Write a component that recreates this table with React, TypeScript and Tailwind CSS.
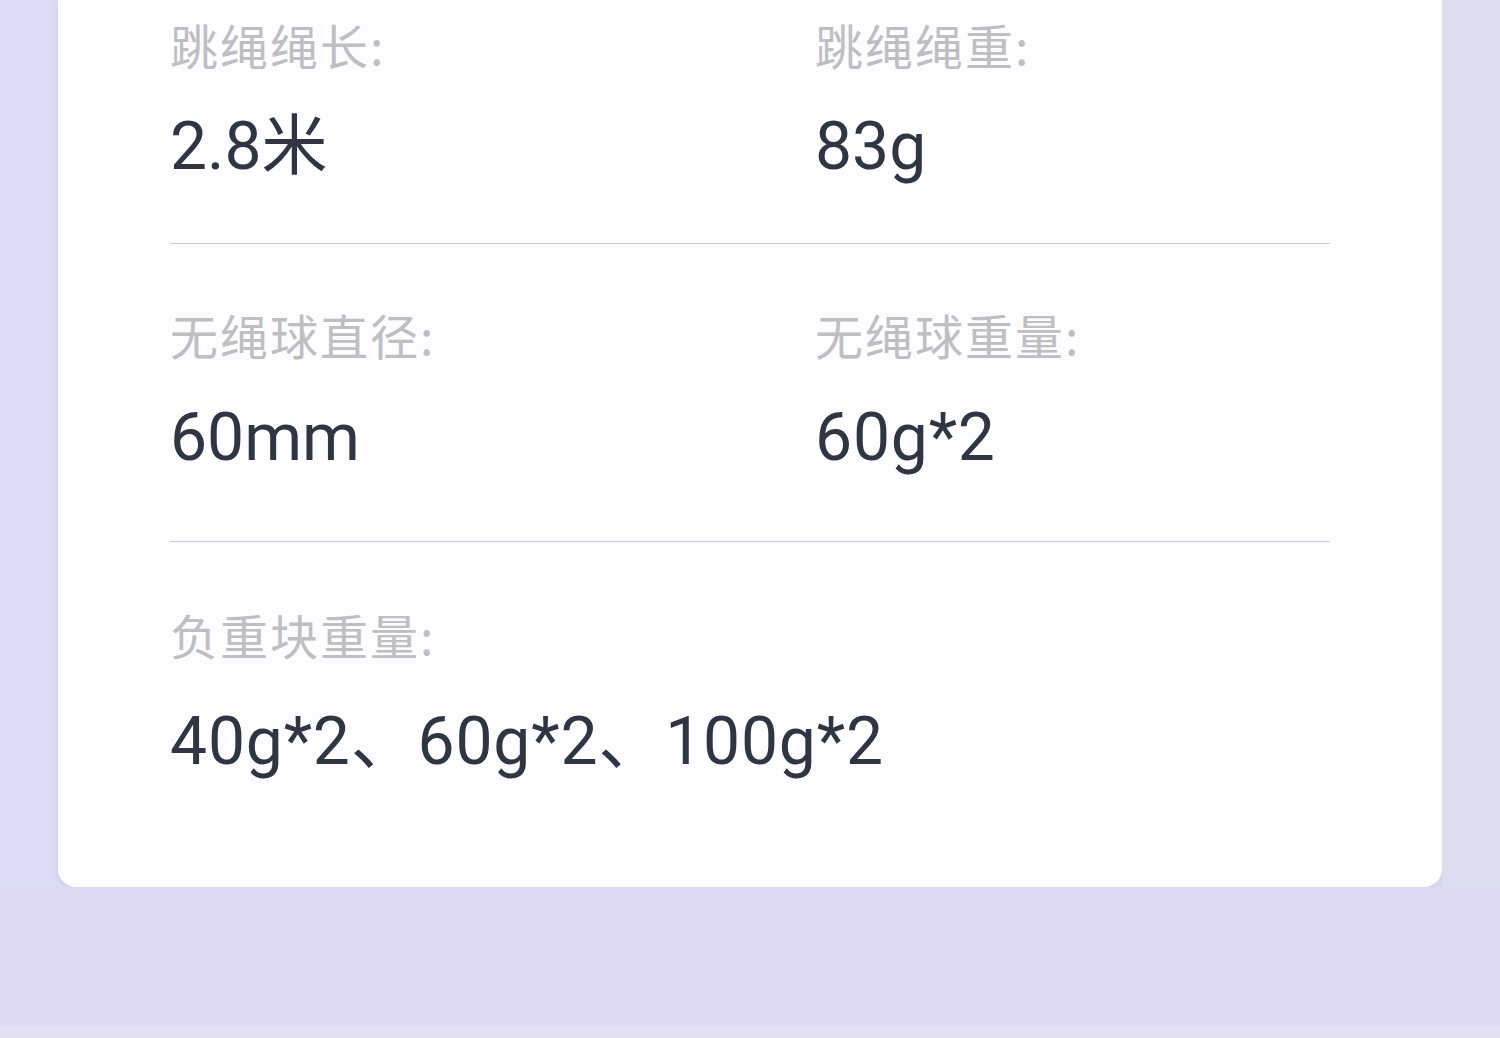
import React from "react";

const labelCls =
  "h-[60px] leading-[60px] text-[48px] text-[#bebec3] tracking-[2px] [font-family:'Noto_Sans_CJK_SC',sans-serif]";
const valueCls =
  "h-[80px] leading-[80px] text-[66px] text-[#2f3542] [font-family:Roboto,'Noto_Sans_CJK_SC',sans-serif]";

function Item({ label, value, gap, wide }: { label: string; value: string; gap: string; wide?: boolean }) {
  return (
    <div className="flex flex-col">
      <div className={labelCls}>{label}</div>
      <div className={gap + " " + valueCls + (wide ? " tracking-[0.8px]" : "")}>{value}</div>
    </div>
  );
}

export default function App() {
  return (
    <div className="w-[1500px] h-[1038px] bg-[#dddaf3] overflow-hidden flex flex-col">
      <div className="flex h-[887px] bg-[#dcdcf6]">
        <div className="w-[58px] bg-[#dcdcf6]" />
        <div className="w-[1384px] h-[887px] bg-[#fdfdff] rounded-b-[18px] px-[112px] pt-[14px] flex flex-col shadow-[0_2px_6px_rgba(160,150,200,0.25)]">
          <div className="grid grid-cols-[645px_1fr]">
            <Item label="跳绳绳长:" value="2.8米" gap="mt-[33px]" />
            <Item label="跳绳绳重:" value="83g" gap="mt-[33px]" />
          </div>
          <div className="mt-[56px] h-px bg-[#c9c9cf]" />
          <div className="mt-[60px] grid grid-cols-[645px_1fr]">
            <Item label="无绳球直径:" value="60mm" gap="mt-[34px]" />
            <Item label="无绳球重量:" value="60g*2" gap="mt-[34px]" wide />
          </div>
          <div className="mt-[63px] h-px bg-[#c9c9cf]" />
          <div className="mt-[62px]">
            <Item label="负重块重量:" value="40g*2、60g*2、100g*2" gap="mt-[38px]" wide />
          </div>
        </div>
        <div className="flex-1 bg-[#dcdef0]" />
      </div>
      <div className="flex-1 bg-[#dedaf3] flex flex-col justify-end">
        <div className="h-[12px] bg-[#e4e2f2]" />
      </div>
    </div>
  );
}
